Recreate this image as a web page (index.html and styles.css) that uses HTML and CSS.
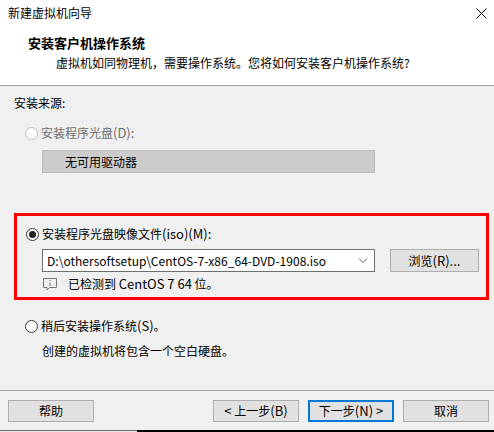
FILE: index.html
```html
<!DOCTYPE html>
<html lang="zh-CN">
<head>
<meta charset="utf-8">
<title>新建虚拟机向导</title>
<link rel="stylesheet" href="styles.css">
</head>
<body>
<div class="dialog">
  <header class="top">
    <div class="titlebar">
      <span class="title">新建虚拟机向导</span>
      <svg class="close" width="11" height="11" viewBox="0 0 11 11"><path d="M0.5 0.5L10.5 10.5M10.5 0.5L0.5 10.5" stroke="#000" stroke-width="1" fill="none"/></svg>
    </div>
    <h1 class="heading">安装客户机操作系统</h1>
    <p class="sub">虚拟机如同物理机，需要操作系统。您将如何安装客户机操作系统?</p>
  </header>
  <main class="body">
    <div class="source">安装来源:</div>
    <label class="radio disabled first"><span class="dot"></span><span>安装程序光盘<span class="lat">(D):</span></span></label>
    <div class="select off">无可用驱动器</div>
    <section class="iso">
      <label class="radio"><span class="dot on"></span><span>安装程序光盘映像文件<span class="lat">(iso)(M):</span></span></label>
      <div class="row">
        <div class="select path">
          <span class="pathtext">D:\othersoftsetup\CentOS-7-x86_64-DVD-1908.iso</span>
          <svg width="10" height="6" viewBox="0 0 10 6"><path d="M1 0.5L5 4.5L9 0.5" stroke="#555" fill="none"/></svg>
        </div>
        <button class="btn browse">浏览<span class="lat">(R)...</span></button>
      </div>
      <div class="detect">
        <svg width="14" height="14" viewBox="0 0 14 14"><path d="M0.5 1.5H13.5V10.5H6.5L4 13V10.5H0.5Z" fill="none" stroke="#777"/><path d="M7 3V4M7 5.5V9" stroke="#777" fill="none"/></svg>
        <span>已检测到 <span class="lat">CentOS 7 64</span> 位。</span>
      </div>
    </section>
    <label class="radio later"><span class="dot"></span><span>稍后安装操作系统<span class="lat">(S)</span>。</span></label>
    <p class="note">创建的虚拟机将包含一个空白硬盘。</p>
  </main>
  <footer class="foot">
    <button class="btn">帮助</button>
    <div class="nav">
      <button class="btn"><span class="lat">&lt;</span> 上一步<span class="lat">(B)</span></button>
      <button class="btn primary">下一步<span class="lat">(N) &gt;</span></button>
      <button class="btn">取消</button>
    </div>
  </footer>
</div>
<div class="strip"><span class="strip-left"></span></div>
</body>
</html>
```
FILE: styles.css
```css
* { box-sizing: border-box; }
html, body { margin: 0; padding: 0; }
body { width: 494px; height: 432px; overflow: hidden; background: #000; }
.dialog {
  width: 494px; height: 430px; display: flex; flex-direction: column;
  background: #f0f0f0; color: #000;
  font: 12px/16px "Noto Sans CJK SC", "Liberation Sans", sans-serif;
}
.lat { font-size: 13px; }
.strip { height: 2px; background: #000; }
.strip-left { display: block; width: 137px; height: 2px; background: #6e6e6e; border-bottom: 1px solid #e8e8e8; }
.top { height: 86px; background: #fff; border-bottom: 1px solid #a0a0a0; flex: none; }
.titlebar { height: 29px; display: flex; align-items: center; justify-content: space-between; padding: 0 7px 3px 8px; }
.heading { margin: 6px 0 0 28px; font-size: 13px; line-height: 16px; font-weight: 700; }
.sub { margin: 4px 0 0 56px; }
.body { flex: 1; padding: 9px 14px 0; }
.source { height: 16px; }
.radio { display: flex; align-items: center; gap: 3px; height: 16px; }
.first { margin: 14px 0 0 11px; }
.disabled { color: #6d6d6d; }
.dot { width: 13px; height: 13px; border: 1px solid #333; border-radius: 50%; background: #fff; flex: none; position: relative; }
.disabled .dot { border-color: #bcbcbc; }
.dot.on::after { content: ""; position: absolute; left: 2px; top: 2px; width: 7px; height: 7px; border-radius: 50%; background: #222; }
.select { height: 23px; display: flex; align-items: center; justify-content: space-between; }
.select.off { margin: 9px 0 0 28px; width: 333px; background: #ccc; border: 1px solid #bcbcbc; padding-left: 22px; }
.iso { margin: 40px 0 0 0; width: 475px; height: 87px; border: 3px solid #f00; padding: 10px 0 0 9px; }
.row { display: flex; align-items: center; gap: 15px; margin: 7px 0 0 16px; }
.path { width: 333px; background: #fff; border: 1px solid #6e6e6e; padding: 0 6px 0 4px; }
.pathtext { letter-spacing: 0.03px; }
.detect { display: flex; align-items: center; gap: 11px; margin: 2px 0 0 17px; height: 20px; }
.later { margin: 18px 0 0 11px; }
.note { margin: 9px 0 0 28px; }
.foot { height: 40px; flex: none; border-top: 1px solid #a0a0a0; display: flex; justify-content: space-between; padding: 9px 5px 0 8px; }
.nav { display: flex; gap: 9px; }
.btn { width: 86px; height: 22px; padding: 0; background: #e1e1e1; border: 1px solid #adadad; font: inherit; color: #000; }
.browse { width: 89px; height: 23px; }
.primary { border: 2px solid #0078d7; }
```
